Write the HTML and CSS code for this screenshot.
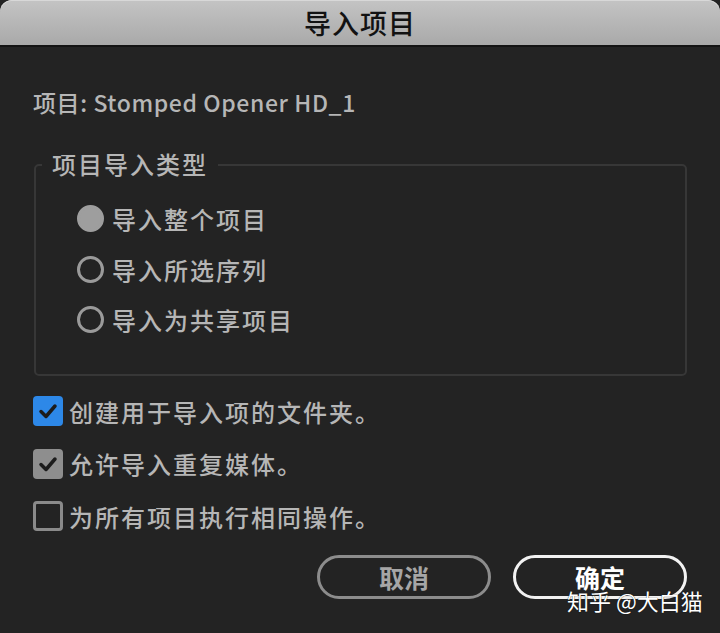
FILE: index.html
```html
<!DOCTYPE html>
<html lang="zh">
<head>
<meta charset="utf-8">
<link rel="stylesheet" href="styles.css">
</head>
<body>
<div class="dialog">
  <div class="titlebar">导入项目</div>
  <div class="content">
    <div class="project">项目: Stomped Opener HD_1</div>
    <fieldset class="group">
      <legend>项目导入类型</legend>
      <div class="radio-row"><span class="radio checked"></span><span>导入整个项目</span></div>
      <div class="radio-row"><span class="radio"></span><span>导入所选序列</span></div>
      <div class="radio-row"><span class="radio"></span><span>导入为共享项目</span></div>
    </fieldset>
    <div class="checks">
      <div class="check-row"><span class="box blue"><svg viewBox="0 0 28 28"><path d="M7 14.5 L12 19.5 L21 9" /></svg></span><span>创建用于导入项的文件夹。</span></div>
      <div class="check-row"><span class="box gray"><svg viewBox="0 0 28 28"><path d="M7 14.5 L12 19.5 L21 9" /></svg></span><span>允许导入重复媒体。</span></div>
      <div class="check-row"><span class="box empty"></span><span>为所有项目执行相同操作。</span></div>
    </div>
    <div class="buttons">
      <div class="btn cancel">取消</div>
      <div class="btn ok">确定</div>
    </div>
  </div>
  <div class="watermark">知乎 @大白猫</div>
</div>
</body>
</html>
```
FILE: styles.css
```css
* { box-sizing: border-box; }
html, body { margin: 0; padding: 0; background: #232323; }
body {
  width: 720px;
  height: 633px;
  overflow: hidden;
  font-family: "Noto Sans CJK SC", "Noto Sans", sans-serif;
  color: #b6b6b6;
}
.dialog {
  position: relative;
  width: 720px;
  height: 633px;
  background: #232323;
}
.titlebar {
  height: 47px;
  background: linear-gradient(#c4c4c4, #a9a9a9);
  border-radius: 12px 12px 0 0;
  border-bottom: 2px solid #141414;
  box-shadow: inset 0 1px 0 #d8d8d8;
  text-align: center;
  font-size: 27px;
  font-weight: 500;
  line-height: 46px;
  color: #121212;
  letter-spacing: 1px;
}
.content {
  padding: 0 33px 0 33px;
}
.project {
  margin-top: 40px;
  font-size: 23px;
  font-weight: 500;
  line-height: 30px;
  height: 30px;
  letter-spacing: 0.6px;
}
.group {
  margin: 47px 0 0 1px;
  padding: 2px 0 0 42px;
  height: 212px;
  border: 2px solid #373737;
  border-radius: 5px;
  min-width: 0;
  position: relative;
}
.group legend {
  position: absolute;
  top: -17px;
  left: 6px;
  padding: 0 10px 0 10px;
  font-size: 24px;
  font-weight: 500;
  letter-spacing: 2px;
  line-height: 30px;
  background: #232323;
}
.radio-row {
  display: flex;
  align-items: center;
  gap: 8px;
  height: 50.5px;
  font-size: 24px;
  font-weight: 500;
  letter-spacing: 2px;
  padding-top: 3px;
}
.radio-row:first-of-type { margin-top: 24px; }
.radio {
  width: 27px;
  height: 27px;
  border-radius: 50%;
  border: 3px solid #9a9a9a;
  flex: none;
  margin-left: -1px;
}
.radio.checked {
  background: #9e9e9e;
  border-color: #9e9e9e;
}
.checks {
  margin-top: 9px;
}
.check-row {
  display: flex;
  align-items: center;
  gap: 6px;
  height: 52.5px;
  font-size: 24px;
  font-weight: 500;
  letter-spacing: 2px;
}
.box {
  width: 30px;
  height: 30px;
  border-radius: 4px;
  flex: none;
  display: flex;
  align-items: center;
  justify-content: center;
}
.box svg { width: 28px; height: 28px; }
.box path { fill: none; stroke: #1c1c1c; stroke-width: 3.5; stroke-linecap: round; stroke-linejoin: round; }
.box.blue { background: #2d88e8; }
.box.gray { background: #8e8e8e; }
.box.empty { border: 3px solid #8a8a8a; }
.buttons {
  margin-top: 12px;
  display: flex;
  justify-content: flex-end;
  gap: 22px;
}
.btn {
  width: 174px;
  height: 44px;
  border-radius: 22px;
  text-align: center;
  font-size: 25px;
  font-weight: bold;
  line-height: 38px;
}
.btn.cancel {
  border: 3px solid #8c8c8c;
  color: #a6a6a6;
}
.btn.ok {
  border: 3px solid #f2f2f2;
  color: #ffffff;
}
.watermark {
  position: absolute;
  left: 567px;
  top: 585px;
  font-size: 22px;
  line-height: 30px;
  color: #ffffff;
  text-shadow: 0 0 1px #000;
}
```
